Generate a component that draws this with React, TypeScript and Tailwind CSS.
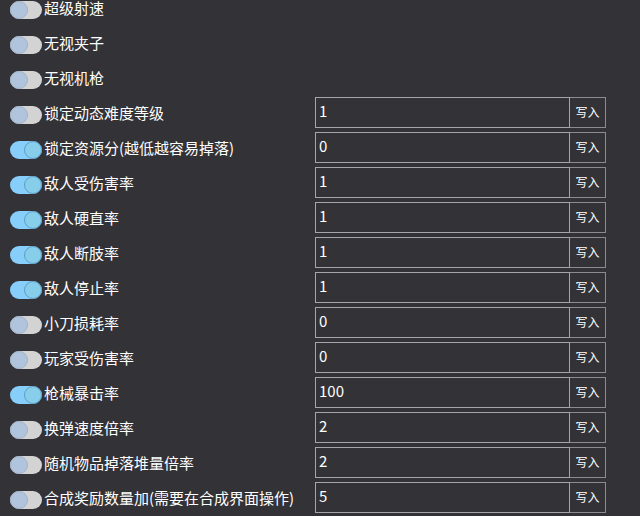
const ROWS: { label: string; on: boolean; value?: string }[] = [
  { label: "超级射速", on: false },
  { label: "无视夹子", on: false },
  { label: "无视机枪", on: false },
  { label: "锁定动态难度等级", on: false, value: "1" },
  { label: "锁定资源分(越低越容易掉落)", on: true, value: "0" },
  { label: "敌人受伤害率", on: true, value: "1" },
  { label: "敌人硬直率", on: true, value: "1" },
  { label: "敌人断肢率", on: true, value: "1" },
  { label: "敌人停止率", on: true, value: "1" },
  { label: "小刀损耗率", on: false, value: "0" },
  { label: "玩家受伤害率", on: false, value: "0" },
  { label: "枪械暴击率", on: true, value: "100" },
  { label: "换弹速度倍率", on: false, value: "2" },
  { label: "随机物品掉落堆量倍率", on: false, value: "2" },
  { label: "合成奖励数量加(需要在合成界面操作)", on: false, value: "5" },
];

function Toggle({ on }: { on: boolean }) {
  return (
    <div
      className={`flex w-[32px] h-[18px] rounded-full shrink-0 ${
        on ? "bg-[#87cefa] justify-end" : "bg-[#d3d3d3] justify-start"
      }`}
    >
      <div
        className={`w-[18px] h-[18px] rounded-full border ${
          on ? "bg-[#87ceeb] border-[#5e9fc4]" : "bg-[#b0c4de] border-[#a3b3c8]"
        }`}
      />
    </div>
  );
}

export default function App() {
  return (
    <div
      className="w-[640px] h-[516px] overflow-hidden bg-[#333237] text-white"
      style={{ fontFamily: '"Noto Sans CJK SC", "Noto Sans", sans-serif' }}
    >
      <div className="-mt-[8px] flex flex-col">
        {ROWS.map((row) => (
          <div key={row.label} className="flex items-center h-[31px] mb-[4px]">
            <div className="flex items-center w-[315px] pt-[5px] pl-[10px]">
              <Toggle on={row.on} />
              <span className="ml-[2px] mb-[5px] text-[15px] leading-[15px] whitespace-nowrap">
                {row.label}
              </span>
            </div>
            {row.value !== undefined && (
              <div className="flex h-[31px]">
                <div className="w-[255px] h-full border border-[#a6a6a6] flex items-center pl-[3px] pb-[2px] text-[15px]">
                  {row.value}
                </div>
                <button className="w-[36px] h-full border border-l-0 border-[#8c8c8c] text-[12px] pb-[2px] flex items-center justify-center text-white">
                  写入
                </button>
              </div>
            )}
          </div>
        ))}
      </div>
    </div>
  );
}
